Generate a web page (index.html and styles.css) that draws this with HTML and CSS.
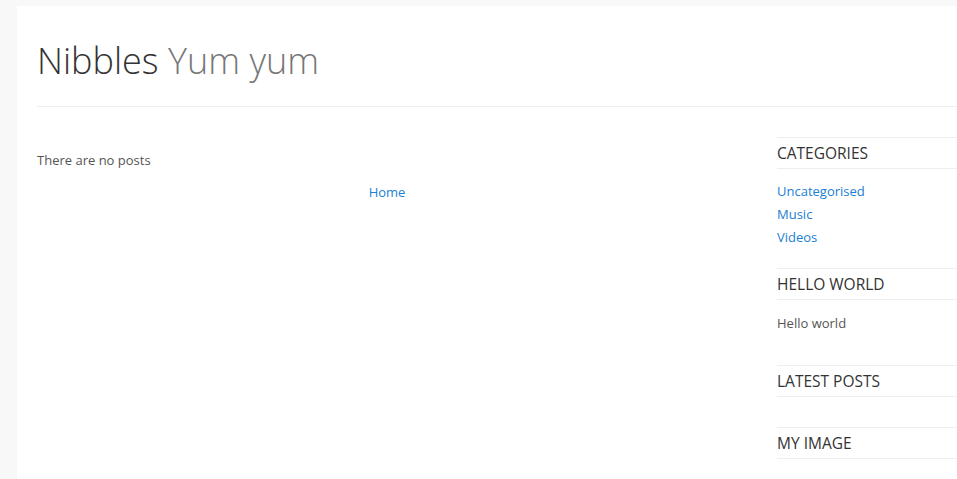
FILE: index.html
```html
<!DOCTYPE html>
<html lang="en">
<head>
<meta charset="utf-8">
<title>Nibbles</title>
<link rel="stylesheet" href="styles.css">
</head>
<body>
<div class="page">
  <header class="site-header">
    <h1 class="site-title">Nibbles <span class="tagline">Yum yum</span></h1>
  </header>
  <div class="content">
    <main class="main">
      <p class="no-posts">There are no posts</p>
      <nav class="breadcrumbs"><a href="#">Home</a></nav>
    </main>
    <aside class="sidebar">
      <section class="widget">
        <h3 class="widget-title">CATEGORIES</h3>
        <ul class="widget-list">
          <li><a href="#">Uncategorised</a></li>
          <li><a href="#">Music</a></li>
          <li><a href="#">Videos</a></li>
        </ul>
      </section>
      <section class="widget">
        <h3 class="widget-title">HELLO WORLD</h3>
        <p class="widget-text">Hello world</p>
      </section>
      <section class="widget">
        <h3 class="widget-title">LATEST POSTS</h3>
      </section>
      <section class="widget">
        <h3 class="widget-title">MY IMAGE</h3>
      </section>
    </aside>
  </div>
</div>
</body>
</html>
```
FILE: styles.css
```css
html, body {
  margin: 0;
  padding: 0;
}
body {
  background: #f8f8f8;
  font-family: "Open Sans", "Liberation Sans", sans-serif;
  color: #555;
  font-size: 13px;
  overflow: hidden;
}
a {
  color: #1a80d3;
  text-decoration: none;
}
.page {
  margin: 6px 0 0 17px;
  padding: 0 0 40px 20px;
  background: #fff;
  min-height: 480px;
}
.site-header {
  padding: 30px 0 21px;
  border-bottom: 1px solid #eee;
}
.site-title {
  margin: 0;
  font-weight: 300;
  font-size: 36px;
  line-height: normal;
  color: #333;
}
.tagline {
  color: #777;
}
.content {
  display: flex;
  gap: 40px;
}
.main {
  width: 700px;
  flex: none;
}
.no-posts {
  margin: 43px 0 0;
  line-height: 20px;
}
.breadcrumbs {
  text-align: center;
  margin-top: 12px;
  line-height: 20px;
}
.sidebar {
  flex: 1;
  padding-top: 30px;
}
.widget {
  display: flow-root;
  margin-bottom: 19px;
}
.widget-title {
  margin: 0 0 11px;
  font-size: 15.5px;
  font-weight: 400;
  line-height: 30px;
  color: #333;
  border-top: 1px solid #eee;
  border-bottom: 1px solid #eee;
}
.widget-list {
  list-style: none;
  margin: 0;
  padding: 0;
}
.widget-list li {
  line-height: 23px;
}
.widget-text {
  margin: 0 0 11px;
  padding-top: 1px;
  line-height: 23px;
}
```
